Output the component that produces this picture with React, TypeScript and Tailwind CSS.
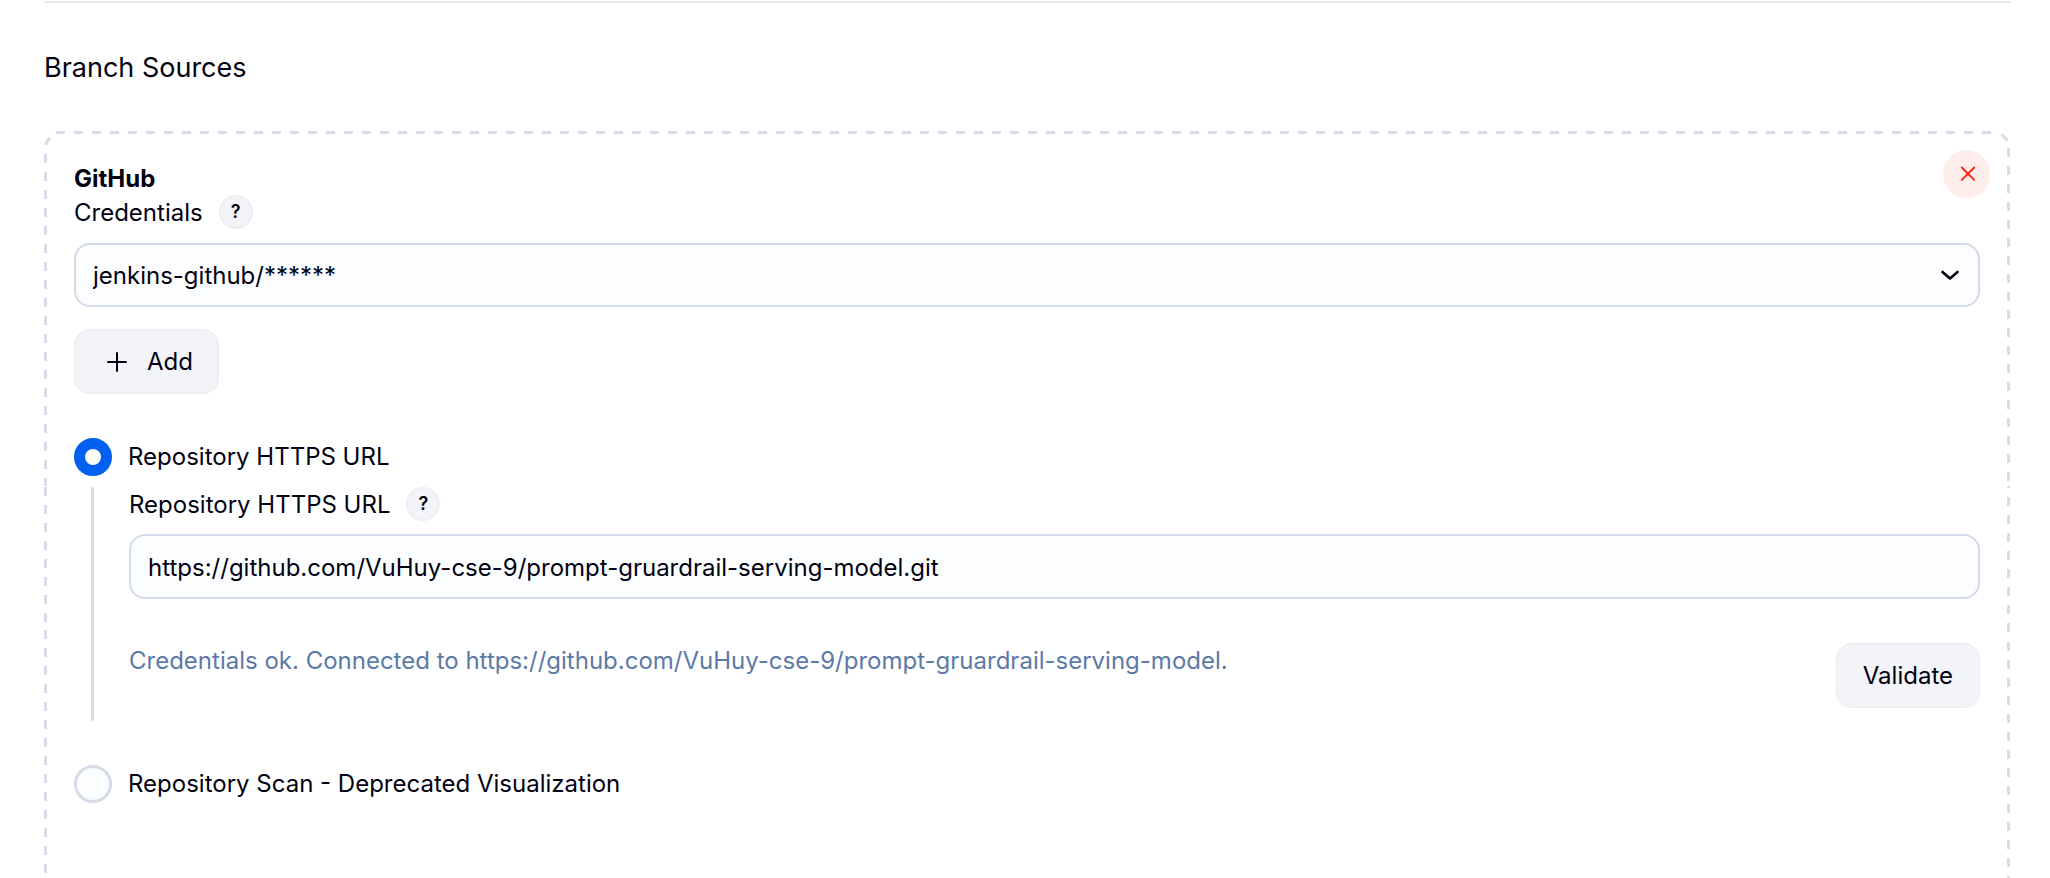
import React, { useState } from "react";

const DASH = "9 9";

function HelpButton({ label }: { label: string }) {
  return (
    <button
      type="button"
      aria-label={label}
      className="flex size-[34px] items-center justify-center rounded-full border-2 border-[#eeeff3] bg-[#f3f4f9] text-lg leading-none font-semibold"
    >
      ?
    </button>
  );
}

function DashedOutline() {
  return (
    <svg
      aria-hidden="true"
      className="pointer-events-none absolute inset-0 h-full w-full overflow-visible"
      fill="none"
      stroke="#d6dce8"
      strokeWidth="3"
    >
      <line x1="12" y1="1.5" x2="99.2%" y2="1.5" strokeDasharray={DASH} />
      <path d="M1.5 14 Q2.5 10.5 6 6.5" />
      <line x1="1.5" y1="23" x2="1.5" y2="355" strokeDasharray={DASH} />
      <line x1="1.5" y1="356" x2="1.5" y2="499" strokeDasharray={DASH} />
      <line x1="1.5" y1="499" x2="1.5" y2="100%" strokeDasharray={DASH} />
      <svg x="100%" overflow="visible">
        <path d="M-8.5 3.5 L-2.5 9.5" />
        <line x1="-1.5" y1="17" x2="-1.5" y2="353" strokeDasharray={DASH} />
        <line x1="-1.5" y1="355" x2="-1.5" y2="357" />
        <line x1="-1.5" y1="366" x2="-1.5" y2="502" strokeDasharray={DASH} />
        <line x1="-1.5" y1="511" x2="-1.5" y2="1500" strokeDasharray={DASH} />
      </svg>
    </svg>
  );
}

const radioClass =
  "size-[38px] shrink-0 appearance-none rounded-full border-3 border-[#d6dce8] bg-[#fcfdff] checked:border-11 checked:border-[#0060f0] checked:bg-white";
const buttonClass =
  "flex h-[65px] items-center rounded-2xl border-2 border-[#eeeff3] bg-[#f3f4f9]";
const fieldClass =
  "w-full rounded-2xl border-2 border-[#d3dae8] bg-[#fcfdff] px-[17px] pt-0.5";

export default function App() {
  const [mode, setMode] = useState("url");
  const [url, setUrl] = useState(
    "https://github.com/VuHuy-cse-9/prompt-gruardrail-serving-model.git",
  );

  return (
    <main className="flex min-h-screen flex-col overflow-hidden bg-white px-11 pr-10 pt-px font-['Inter',sans-serif] text-2xl leading-8 text-[#020212]">
      <hr className="h-0.5 border-0 bg-[#e4eaef]" />
      <h2 className="mt-[49px] text-[27px] leading-8">Branch Sources</h2>

      <section className="relative mt-[47px] flex-1 px-[30px] pt-8">
        <DashedOutline />
        <button
          type="button"
          aria-label="Delete"
          className="absolute top-[19px] right-5 flex h-12 w-[47px] items-center justify-center rounded-full bg-[#ffedeb] text-[#fa1e0a]"
        >
          <svg aria-hidden="true" className="size-4" viewBox="0 0 16 16" fill="none" stroke="currentColor" strokeWidth="1.8" strokeLinecap="round">
            <path d="M2.8 1.5 L15.2 13.9 M15.2 1.5 L2.8 13.9" />
          </svg>
        </button>

        <h3 className="font-bold">GitHub</h3>
        <div className="flex items-center gap-4">
          <label htmlFor="credentials" className="pt-0.5">Credentials</label>
          <HelpButton label="Help for Credentials" />
        </div>
        <div className="relative mt-3.5">
          <select id="credentials" className={`${fieldClass} h-16 appearance-none`}>
            <option>jenkins-github/******</option>
          </select>
          <svg aria-hidden="true" className="pointer-events-none absolute top-6 right-5 h-4 w-5" viewBox="0 0 20 16" fill="none" stroke="currentColor" strokeWidth="2.6" strokeLinecap="round" strokeLinejoin="round">
            <path d="M2.5 5 L10 11.5 L17.5 5" />
          </svg>
        </div>
        <button type="button" className={`${buttonClass} mt-[22px] gap-5 pr-6 pl-[31px]`}>
          <svg aria-hidden="true" className="size-5" viewBox="0 0 20 20" fill="none" stroke="currentColor" strokeWidth="2" strokeLinecap="round">
            <path d="M10 1 V19 M1 10 H19" />
          </svg>
          Add
        </button>

        <div className="mt-11 flex items-center gap-4">
          <input id="mode-url" type="radio" name="mode" checked={mode === "url"} onChange={() => setMode("url")} className={radioClass} />
          <label htmlFor="mode-url">Repository HTTPS URL</label>
        </div>
        <div className="mt-[11px] ml-[17px] flex gap-[35px]">
          <div className="w-[3px] shrink-0 rounded-full bg-[#d6dce8]" />
          <div className="min-w-0 flex-1 pb-[13px]">
            <div className="flex items-center gap-4">
              <label htmlFor="repository" className="pt-0.5">Repository HTTPS URL</label>
              <HelpButton label="Help for Repository HTTPS URL" />
            </div>
            <input
              id="repository"
              type="text"
              value={url}
              onChange={(event) => setUrl(event.target.value)}
              className={`${fieldClass} mt-[13px] block h-[65px]`}
            />
            <div className="mt-11 flex items-start justify-between gap-6">
              <p className="pt-0.5 text-[#5c7aa6]">
                Credentials ok. Connected to https://github.com/VuHuy-cse-9/prompt-gruardrail-serving-model.
              </p>
              <button type="button" className={`${buttonClass} px-[25px]`}>
                Validate
              </button>
            </div>
          </div>
        </div>

        <div className="mt-11 flex items-center gap-4">
          <input id="mode-scan" type="radio" name="mode" checked={mode === "scan"} onChange={() => setMode("scan")} className={radioClass} />
          <label htmlFor="mode-scan">Repository Scan - Deprecated Visualization</label>
        </div>
      </section>
    </main>
  );
}
